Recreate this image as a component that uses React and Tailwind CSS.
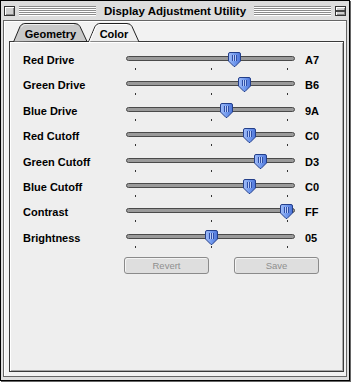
import React from "react";

const rows = [
  ["Red Drive", "A7", 234],
  ["Green Drive", "B6", 244],
  ["Blue Drive", "9A", 226.5],
  ["Red Cutoff", "C0", 249.5],
  ["Green Cutoff", "D3", 260],
  ["Blue Cutoff", "C0", 249.5],
  ["Contrast", "FF", 286.5],
  ["Brightness", "05", 211],
];

function Thumb() {
  return (
    <svg width="13" height="15" viewBox="0 0 13 15">
      <defs>
        <linearGradient id="tg" x1="0" y1="0" x2="1" y2="0">
          <stop offset="0" stopColor="#a3bdf7" />
          <stop offset="0.5" stopColor="#729aee" />
          <stop offset="1" stopColor="#4d74d8" />
        </linearGradient>
      </defs>
      <path
        d="M2 0.5 H11 Q12.5 0.5 12.5 2 V9 L7 14.5 H6 L0.5 9 V2 Q0.5 0.5 2 0.5 Z"
        fill="url(#tg)"
        stroke="#233f8a"
      />
      <path d="M4.5 3 V9 M6.5 3 V9 M8.5 3 V9" stroke="#2f4fa8" strokeWidth="1" />
      <path d="M5.5 3 V9 M7.5 3 V9" stroke="#b8ccf8" strokeWidth="1" />
    </svg>
  );
}

function Slider({ center }) {
  const left = center - 126 - 6.5;
  return (
    <div className="relative h-full w-[169px]">
      <div className="absolute left-0 right-0 top-[5px] h-[5px] rounded-full border border-[#4a4a4a] bg-[#9a9a9a]" />
      <div className="absolute left-[9px] top-[17px] h-[2px] w-px bg-[#333]" />
      <div className="absolute left-[85px] top-[17px] h-[2px] w-px bg-[#333]" />
      <div className="absolute left-[161px] top-[17px] h-[2px] w-px bg-[#333]" />
      <div className="absolute top-[1px]" style={{ left }}>
        <Thumb />
      </div>
    </div>
  );
}

function Box({ shade }) {
  return (
    <div className="relative h-[10px] w-[11px] border border-[#333] bg-[#cfcfcf] shadow-[inset_1px_1px_0_#fff,inset_-1px_-1px_0_#888]">
      {shade && <div className="absolute left-0 right-0 top-[3px] h-[2px] border-y border-[#444]" />}
    </div>
  );
}

export default function App() {
  const stripes =
    "bg-[repeating-linear-gradient(to_bottom,#8c8c8c_0px,#8c8c8c_1px,#ffffff_1px,#ffffff_2px)]";
  return (
    <div
      className="h-[382px] w-[351px] bg-white"
      style={{ fontFamily: '"Liberation Sans", Arial, sans-serif' }}
    >
      <div className="flex h-[381px] w-[350px] flex-col border border-black bg-[#dddddd] shadow-[1px_1px_0_#666]">
        {/* title bar */}
        <div className="flex h-[19px] items-center gap-[4px] px-[3px]">
          <Box />
          <div className={`h-[10px] flex-1 ${stripes}`} />
          <div className="px-[4px] text-[11.5px] font-bold leading-[14px] text-black">
            Display Adjustment Utility
          </div>
          <div className={`h-[10px] flex-1 ${stripes}`} />
          <Box shade />
        </div>
        {/* body */}
        <div className="flex flex-1 flex-col px-[2px] pb-[3px]">
          <div className="flex flex-1 flex-col border border-[#666] bg-[#f2f2f2] pb-[4px] pl-[5px] pr-[2px] pt-[2px] shadow-[inset_1px_1px_0_#fff]">
            {/* tabs */}
            <div className="relative z-10 -mb-px flex h-[19px] pl-[4px]">
              <div className="relative flex h-[19px] w-[75px] items-center justify-center">
                <svg className="absolute inset-0" width="75" height="19" viewBox="0 0 75 19">
                  <path
                    d="M0.5 19 L7 3.5 Q8.5 0.5 12 0.5 H62 Q65.5 0.5 67 3.5 L74 18.5 Z"
                    fill="#c9c9c9"
                    stroke="#222"
                  />
                  <path d="M8.5 4.5 Q9.5 1.5 12 1.5 H61" stroke="#eee" fill="none" />
                </svg>
                <span className="relative pt-[2px] text-[11px] font-bold leading-[14px] text-black">
                  Geometry
                </span>
              </div>
              <div className="relative flex h-[19px] w-[52px] items-center justify-center">
                <svg className="absolute inset-0" width="52" height="19" viewBox="0 0 52 19">
                  <path
                    d="M0.5 19 L7 3.5 Q8.5 0.5 12 0.5 H39 Q42.5 0.5 44 3.5 L51 19 Z"
                    fill="#eeeeee"
                    stroke="#222"
                  />
                  <path d="M1.5 19 L8 4 Q9.5 1.5 12 1.5 H39" stroke="#fff" fill="none" />
                </svg>
                <span className="relative pt-[2px] text-[11px] font-bold leading-[14px] text-black">
                  Color
                </span>
              </div>
            </div>
            {/* panel */}
            <div className="flex flex-1 flex-col border border-[#3a3a3a] bg-[#eeeeee] pl-[13px] pt-[9px] shadow-[inset_1px_1px_0_#fff,inset_-1px_-1px_0_#a8a8a8]">
              {rows.map(([label, val, c], i) => (
                <div key={i} className="flex h-[25.4px] items-start">
                  <div className="mt-[2px] w-[103px] text-[11px] font-bold leading-[14px] text-black">
                    {label}
                  </div>
                  <Slider center={c} />
                  <div className="ml-[10px] mt-[2px] text-[11px] font-bold leading-[14px] text-black">
                    {val}
                  </div>
                </div>
              ))}
              <div className="mt-[3px] flex gap-[25px] pl-[101px]">
                <div className="flex h-[17px] w-[85px] items-center justify-center rounded-[3px] border border-[#8a8a8a] bg-[#dedede] text-[9.5px] text-[#8f8f8f] shadow-[inset_1px_1px_0_#f4f4f4]">
                  Revert
                </div>
                <div className="flex h-[17px] w-[85px] items-center justify-center rounded-[3px] border border-[#8a8a8a] bg-[#dedede] text-[9.5px] text-[#8f8f8f] shadow-[inset_1px_1px_0_#f4f4f4]">
                  Save
                </div>
              </div>
            </div>
          </div>
        </div>
      </div>
    </div>
  );
}
